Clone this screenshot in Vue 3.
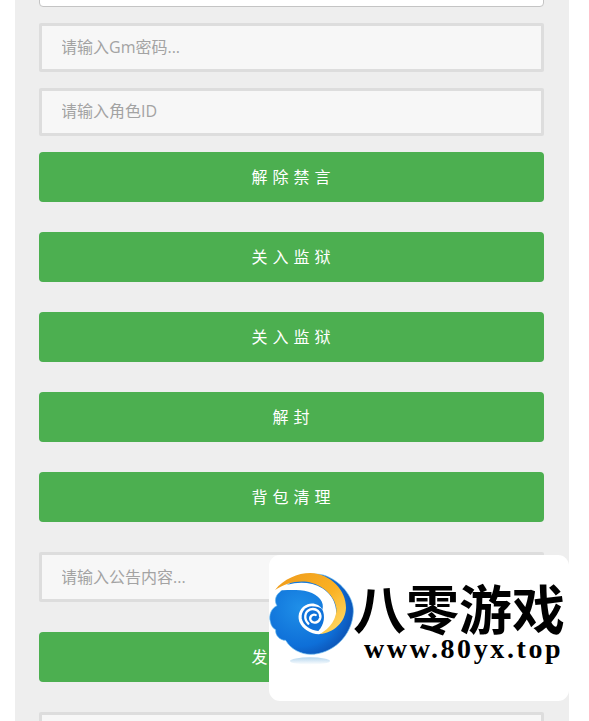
<script setup>
const topButtons = ['解除禁言', '关入监狱', '关入监狱', '解封', '背包清理']
</script>

<template>
  <div class="page">
    <main class="panel">
      <input class="field field-top" type="text" />
      <input class="field" type="text" placeholder="请输入Gm密码..." />
      <input class="field" type="text" placeholder="请输入角色ID" />
      <button v-for="(label, i) in topButtons" :key="i" class="action" type="button">{{ label }}</button>
      <input class="field field-notice" type="text" placeholder="请输入公告内容..." />
      <button class="action" type="button">发送公告</button>
      <input class="field" type="text" />
    </main>

    <aside class="logo">
      <svg class="swirl" viewBox="0 0 300 315" aria-hidden="true">
        <defs>
          <linearGradient id="gOrange" x1="0" y1="0" x2="1" y2="1">
            <stop offset="0" stop-color="#ee9a1c" />
            <stop offset="0.55" stop-color="#fbb224" />
            <stop offset="1" stop-color="#ffdf70" />
          </linearGradient>
          <radialGradient id="gBlue" cx="0.36" cy="0.42" r="0.8">
            <stop offset="0" stop-color="#1f8fe8" />
            <stop offset="0.6" stop-color="#0e6fd8" />
            <stop offset="0.85" stop-color="#0c4fb0" />
            <stop offset="1" stop-color="#0a2f86" />
          </radialGradient>
          <linearGradient id="gFade" x1="0" y1="0" x2="0" y2="1">
            <stop offset="0" stop-color="#b4d6ee" />
            <stop offset="1" stop-color="#ffffff" />
          </linearGradient>
        </defs>
        <ellipse cx="135" cy="288" rx="60" ry="11" fill="url(#gFade)" />
        <path fill="url(#gBlue)" stroke="#6cbcf0" stroke-width="2" d="M44 82 C30 92 28 110 36 122 C20 128 10 150 16 170 C18 182 24 190 32 194 C30 210 44 226 62 226 C76 252 108 268 136 268 C200 268 262 215 265 140 C267 95 225 45 175 30 C130 20 80 40 44 82 Z" />
        <path fill="#ffffff" d="M30 76 C70 50 130 44 172 70 C214 96 226 150 200 184 C190 198 176 206 162 208 C136 206 112 192 103 170 C96 148 106 126 128 118 C144 112 164 118 172 134 C180 112 160 88 130 80 C100 72 60 76 30 76 Z" />
        <path fill="#0f72da" d="M172 134 C181 152 178 178 160 198 C136 196 114 182 110 160 C108 140 122 124 140 124 C154 124 166 126 172 134 Z" />
        <path fill="none" stroke="#ffffff" stroke-width="7" stroke-linecap="round" d="M130 176 C116 162 118 140 136 133 C154 128 168 142 166 158 C162 174 144 178 137 166 C132 156 142 146 152 150" />
        <path fill="url(#gOrange)" d="M30 75 C56 42 98 24 136 24 C198 26 244 78 243 128 C242 172 204 204 165 207 C196 190 216 160 214 130 C210 92 172 58 126 50 C92 46 58 56 30 75 Z" />
      </svg>
      <div class="brand">
        <div class="brand-name">八零游戏</div>
        <div class="brand-url">www.80yx.top</div>
      </div>
    </aside>
  </div>
</template>

<style scoped>
.page {
  position: relative;
  height: 721px;
  overflow: hidden;
  background: #ffffff;
  font-family: "Open Sans", "Noto Sans CJK SC", sans-serif;
}

.panel {
  display: flex;
  flex-direction: column;
  align-items: stretch;
  width: 505px;
  min-height: 800px;
  margin-left: 15px;
  padding: 0 25px 0 24px;
  background: #eeeeee;
}

.field {
  box-sizing: border-box;
  flex: none;
  height: 48.5px;
  margin: 0 0 16px;
  padding: 0 20px 1px 20px;
  border: 3px solid #dddddd;
  border-radius: 2px;
  outline: none;
  background: #f7f7f7;
  color: #555555;
  font-family: "Open Sans", "Noto Sans CJK SC", sans-serif;
  font-size: 16px;
  font-weight: 400;
  text-indent: -1px;
}

.field::placeholder {
  color: #a3a3a3;
  opacity: 1;
}

.field-top {
  margin-top: -41.5px;
  border: 1px solid #c4c4c4;
  border-radius: 4px;
  background: #ffffff;
}

.field-notice {
  height: 49.5px;
  padding-top: 2px;
  margin-bottom: 30px;
}

.action {
  flex: none;
  height: 50px;
  margin: 0 0 30px;
  padding: 0 0 2px 4px;
  border: none;
  border-radius: 4px;
  background: #4caf50;
  color: #ffffff;
  font-family: "Open Sans", "Noto Sans CJK SC", sans-serif;
  font-size: 16px;
  font-weight: 400;
  letter-spacing: 5px;
}

.logo {
  position: absolute;
  left: 269px;
  top: 555px;
  display: flex;
  align-items: flex-start;
  width: 300px;
  height: 146px;
  border-radius: 11px;
  background: #ffffff;
}

.swirl {
  flex: none;
  width: 100px;
  height: 105px;
  margin: 10px 0 0 -4px;
}

.brand {
  display: flex;
  flex-direction: column;
  margin-left: -12px;
  padding-top: 22px;
}

.brand-name {
  color: #000000;
  font-family: "Noto Sans CJK SC", sans-serif;
  font-size: 53px;
  font-weight: 700;
  line-height: 60px;
  white-space: nowrap;
}

.brand-url {
  margin-top: -3px;
  margin-left: 11px;
  color: #000000;
  font-family: "Liberation Serif", serif;
  font-size: 28px;
  font-weight: 700;
  line-height: 30px;
  letter-spacing: 2.6px;
  white-space: nowrap;
}
</style>
